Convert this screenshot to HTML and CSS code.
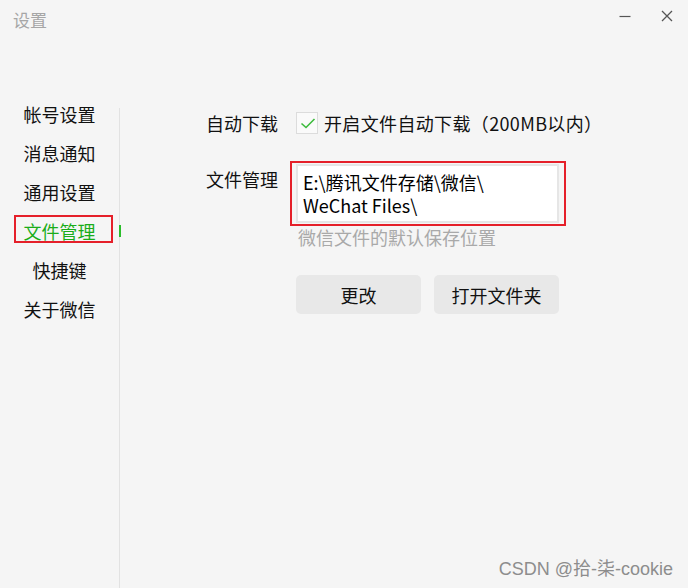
FILE: index.html
```html
<!DOCTYPE html>
<html lang="zh-CN">
<head>
<meta charset="utf-8">
<title>设置</title>
<link rel="stylesheet" href="styles.css">
</head>
<body>
<div class="window">
  <header class="titlebar">
    <div class="title">设置</div>
    <div class="controls">
      <svg class="ctl" width="12" height="12" viewBox="0 0 12 12"><path d="M0.5 6.5H11.5" stroke="#555" stroke-width="1.2"/></svg>
      <svg class="ctl" width="12" height="12" viewBox="0 0 12 12"><path d="M1 1L11 11M11 1L1 11" stroke="#555" stroke-width="1.3"/></svg>
    </div>
  </header>
  <div class="main">
    <nav class="sidebar">
      <ul class="menu">
        <li class="item">帐号设置</li>
        <li class="item">消息通知</li>
        <li class="item">通用设置</li>
        <li class="item active">文件管理<span class="mark"></span><span class="indicator"></span></li>
        <li class="item">快捷键</li>
        <li class="item">关于微信</li>
      </ul>
    </nav>
    <section class="content">
      <div class="row row-download">
        <div class="label">自动下载</div>
        <label class="check">
          <span class="box">
            <svg width="20" height="20" viewBox="0 0 20 20"><path d="M4.5 10.5L9 14.5L17.5 6" fill="none" stroke="#3dbb3d" stroke-width="1.6"/></svg>
          </span>
          <span class="check-text">开启文件自动下载（200MB以内）</span>
        </label>
      </div>
      <div class="row row-files">
        <div class="label label-files">文件管理</div>
        <div class="field">
          <div class="pathbox">
            <div class="path-line">E:\腾讯文件存储\微信\</div>
            <div class="path-line">WeChat Files\</div>
            <span class="mark mark-path"></span>
          </div>
          <div class="hint">微信文件的默认保存位置</div>
          <div class="buttons">
            <button class="btn">更改</button>
            <button class="btn">打开文件夹</button>
          </div>
        </div>
      </div>
      <div class="watermark">CSDN @拾-柒-cookie</div>
    </section>
  </div>
</div>
</body>
</html>
```

FILE: styles.css
```css
* { box-sizing: border-box; }
html, body {
  margin: 0;
  padding: 0;
  background: #f5f5f5;
}
body {
  font-family: "Noto Sans CJK SC", "Noto Sans", sans-serif;
  color: #111;
  width: 688px;
  height: 588px;
  overflow: hidden;
}
.window {
  display: flex;
  flex-direction: column;
  height: 588px;
}
.titlebar {
  display: flex;
  justify-content: space-between;
  align-items: flex-start;
  height: 108px;
  flex: none;
}
.title {
  font-size: 17px;
  line-height: 24px;
  color: #a6a6a6;
  padding: 8px 0 0 13px;
}
.controls {
  display: flex;
  gap: 30px;
  padding: 10px 15px 0 0;
}
.ctl { display: block; }
.main {
  display: flex;
  flex: 1;
}
.sidebar {
  width: 120px;
  flex: none;
  border-right: 1px solid #e2e2e2;
}
.menu {
  list-style: none;
  margin: -13px 0 0 0;
  padding: 0;
}
.item {
  position: relative;
  height: 39px;
  line-height: 39px;
  font-size: 18px;
  text-align: center;
  color: #111;
}
.item.active { color: #1aad19; }
.mark {
  position: absolute;
  border: 2px solid #e5202a;
  pointer-events: none;
}
.item .mark {
  left: 14px;
  top: 3px;
  width: 99px;
  height: 28px;
}
.indicator {
  position: absolute;
  right: -2px;
  top: 13px;
  width: 2px;
  height: 12px;
  background: #2bbd2b;
}
.content {
  position: relative;
  flex: 1;
  padding: 4px 0 0 86px;
}
.row {
  display: flex;
}
.label {
  width: 90px;
  flex: none;
  font-size: 18px;
  line-height: 22px;
}
.row-download { align-items: center; }
.check {
  display: flex;
  align-items: center;
  gap: 6px;
}
.box {
  width: 22px;
  height: 22px;
  border: 1px solid #dcdcdc;
  background: #fafafa;
  display: flex;
  align-items: center;
  justify-content: center;
}
.box svg { display: block; }
.check-text {
  font-size: 18px;
  line-height: 22px;
  letter-spacing: 0.35px;
}
.row-files { margin-top: 30px; }
.label-files {
  line-height: 23px;
  margin-top: 4px;
}
.field {
  display: flex;
  flex-direction: column;
}
.pathbox {
  position: relative;
  width: 263px;
  height: 59px;
  background: #fff;
  border: 2px solid #e6e6e6;
  padding: 6px 0 0 5px;
  display: flex;
  flex-direction: column;
  gap: 2px;
  color: #000;
}
.path-line {
  font-size: 18px;
  line-height: 21px;
  height: 21px;
}
.mark-path {
  left: -8px;
  top: -5px;
  width: 276px;
  height: 65px;
}
.hint {
  margin-top: 3px;
  padding-left: 2px;
  font-size: 18px;
  line-height: 23px;
  color: #a9a9a9;
}
.buttons {
  display: flex;
  gap: 13px;
  margin-top: 26px;
}
.btn {
  width: 125px;
  height: 39px;
  border: none;
  border-radius: 5px;
  background: #e8e8e8;
  font-family: "Noto Sans CJK SC", "Noto Sans", sans-serif;
  font-size: 18px;
  color: #111;
  padding: 0;
}
.watermark {
  position: absolute;
  right: 15px;
  bottom: 8px;
  font-family: "Liberation Sans", "Noto Sans CJK SC", sans-serif;
  font-size: 18px;
  line-height: 22px;
  color: #8d8d8d;
}
```
